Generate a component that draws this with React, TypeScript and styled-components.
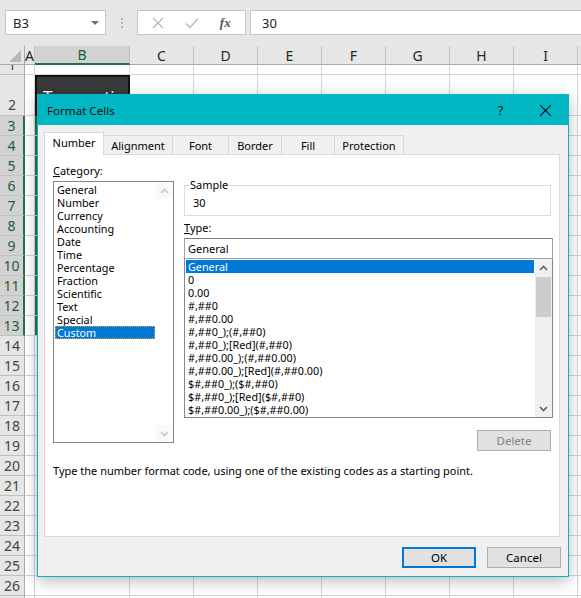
import React from 'react';
import styled, { createGlobalStyle } from 'styled-components';

const GlobalStyle = createGlobalStyle`
  html, body { margin: 0; padding: 0; background: #fff; }
  body { font-family: 'Noto Sans', 'Open Sans', Arial, sans-serif; }
  * { box-sizing: border-box; }
`;

const Screen = styled.div`
  position: relative;
  width: 581px;
  height: 598px;
  overflow: hidden;
  background: #fff;
`;

/* ---------- formula bar ---------- */

const FormulaBar = styled.div`
  height: 46px;
  background: #e6e6e6;
  display: flex;
  align-items: flex-start;
  padding: 10px 0 0 5px;
`;

const NameBox = styled.div`
  width: 101px;
  height: 25px;
  background: #fff;
  border: 1px solid #c6c6c6;
  display: flex;
  align-items: center;
  justify-content: space-between;
  padding: 0 6px 0 7px;
  font-size: 13px;
  color: #222;
`;

const DropTri = styled.span`
  width: 0;
  height: 0;
  border-left: 4px solid transparent;
  border-right: 4px solid transparent;
  border-top: 4px solid #707070;
`;

const Dots = styled.div`
  width: 31px;
  height: 25px;
  display: flex;
  flex-direction: column;
  align-items: center;
  justify-content: center;
  gap: 2px;
  span {
    width: 2px;
    height: 2px;
    background: #b4b4b4;
  }
`;

const FxBox = styled.div`
  width: 109px;
  height: 25px;
  background: #fff;
  border: 1px solid #c6c6c6;
  display: flex;
  align-items: center;
  justify-content: space-around;
  padding: 0 4px;
`;

const FxText = styled.span`
  font-family: 'Liberation Serif', serif;
  font-style: italic;
  font-weight: bold;
  font-size: 13px;
  color: #555;
`;

const FormulaInput = styled.div`
  flex: 1;
  height: 25px;
  margin-left: 4px;
  background: #fff;
  border: 1px solid #c6c6c6;
  border-right: none;
  display: flex;
  align-items: center;
  padding-left: 11px;
  font-size: 13px;
  color: #222;
`;

/* ---------- sheet grid ---------- */

const Sheet = styled.div`
  display: grid;
  grid-template-columns: 25px 10px 95px repeat(8, 64px);
  grid-template-rows: 19px 10px 41px repeat(25, 20px);
  font-size: 14px;
`;

const ColHead = styled.div<{ $sel?: boolean }>`
  background: ${(p) => (p.$sel ? '#d2d2d2' : '#e6e6e6')};
  border-right: 1px solid #c0c0c0;
  border-bottom: ${(p) => (p.$sel ? '2px solid #217346' : '1px solid #ababab')};
  display: flex;
  align-items: center;
  justify-content: center;
  color: ${(p) => (p.$sel ? '#1e5c3a' : '#262626')};
  overflow: hidden;
`;

const Corner = styled.div`
  background: #e6e6e6;
  border-right: 1px solid #ababab;
  border-bottom: 1px solid #ababab;
  position: relative;
  &::after {
    content: '';
    position: absolute;
    right: 3px;
    bottom: 2px;
    border-left: 12px solid transparent;
    border-bottom: 12px solid #b7b7b7;
  }
`;

const RowHead = styled.div<{ $sel?: boolean; $align: 'center' | 'flex-end' | 'flex-start' }>`
  background: ${(p) => (p.$sel ? '#d2d2d2' : '#e6e6e6')};
  border-right: ${(p) => (p.$sel ? '2px solid #217346' : '1px solid #ababab')};
  border-bottom: 1px solid #c0c0c0;
  display: flex;
  align-items: ${(p) => p.$align};
  justify-content: center;
  color: ${(p) => (p.$sel ? '#1e5c3a' : '#444')};
  overflow: hidden;
  line-height: 20px;
`;

const ClippedNum = styled.span`
  display: block;
  margin-top: -10px;
`;

const Cell = styled.div<{ $selLeft?: boolean }>`
  border-right: 1px solid #d4d4d4;
  border-bottom: 1px solid #d4d4d4;
  box-shadow: ${(p) => (p.$selLeft ? 'inset 2px 0 0 #217346' : 'none')};
`;

const DarkCell = styled.div`
  background: #3a3a3a;
  border: 2px solid #111;
  color: #fff;
  font-size: 17px;
  padding: 8px 0 0 6px;
  white-space: nowrap;
  overflow: hidden;
`;

/* ---------- dialog ---------- */

const Dialog = styled.div`
  position: absolute;
  left: 37px;
  top: 94px;
  width: 532px;
  height: 483px;
  background: #f0f0f0;
  border: 1px solid #00b7c3;
  box-shadow: 0 4px 14px rgba(0, 0, 0, 0.28);
  display: flex;
  flex-direction: column;
  font-size: 11px;
  color: #000;
`;

const TitleBar = styled.div`
  height: 30px;
  background: #00b7c3;
  display: flex;
  align-items: center;
  padding-left: 9px;
  font-size: 11.6px;
  color: #111;
`;

const Title = styled.span`
  flex: 1;
`;

const TitleBtn = styled.span`
  width: 45px;
  height: 30px;
  display: flex;
  align-items: center;
  justify-content: center;
  font-size: 13px;
`;

const Body = styled.div`
  flex: 1;
  display: flex;
  flex-direction: column;
  padding: 7px 8px 0 6px;
`;

const TabStrip = styled.div`
  display: flex;
  align-items: flex-end;
  height: 23px;
  position: relative;
  z-index: 1;
  margin-bottom: -1px;
`;

const Tab = styled.div<{ $active?: boolean; $w: number }>`
  width: ${(p) => p.$w}px;
  height: ${(p) => (p.$active ? 23 : 20)}px;
  background: ${(p) => (p.$active ? '#fff' : '#f0f0f0')};
  border: 1px solid #d9d9d9;
  border-bottom: ${(p) => (p.$active ? 'none' : '1px solid #d9d9d9')};
  margin-left: ${(p) => (p.$active ? 0 : -1)}px;
  display: flex;
  align-items: center;
  justify-content: center;
  padding-bottom: ${(p) => (p.$active ? 3 : 0)}px;
`;

const Panel = styled.div`
  width: 516px;
  height: 383px;
  background: #fff;
  border: 1px solid #d9d9d9;
  padding: 9px 6px 0 8px;
  display: flex;
  flex-direction: column;
`;

const Columns = styled.div`
  display: flex;
  gap: 10px;
`;

const LeftCol = styled.div`
  width: 121px;
  display: flex;
  flex-direction: column;
`;

const RightCol = styled.div`
  width: 369px;
  display: flex;
  flex-direction: column;
  padding-top: 16px;
`;

const Label = styled.div<{ $gap?: number }>`
  height: 17px;
  line-height: 14px;
  margin-top: ${(p) => p.$gap ?? 0}px;
  u { text-decoration: underline; }
`;

const ListBox = styled.div<{ $h: number; $top?: boolean }>`
  height: ${(p) => p.$h}px;
  border: 1px solid #828790;
  border-top-color: ${(p) => (p.$top ? '#828790' : '#a0a0a0')};
  background: #fff;
  display: flex;
  font-size: 10.8px;
`;

const Items = styled.div`
  flex: 1;
  padding: 1px 1px 0 1px;
  overflow: hidden;
`;

const Item = styled.div<{ $sel?: boolean; $focus?: boolean }>`
  height: 13px;
  line-height: 13px;
  padding-left: 2px;
  white-space: nowrap;
  background: ${(p) => (p.$sel ? '#0078d7' : 'transparent')};
  color: ${(p) => (p.$sel ? '#fff' : '#000')};
  outline: ${(p) => (p.$focus ? '1px dotted #f0a030' : 'none')};
  outline-offset: -1px;
`;

const ScrollBar = styled.div<{ $disabled?: boolean }>`
  width: 17px;
  background: ${(p) => (p.$disabled ? '#fff' : '#f0f0f0')};
  display: flex;
  flex-direction: column;
  justify-content: space-between;
  align-items: center;
`;

const ScrollBtn = styled.div<{ $disabled?: boolean }>`
  width: 17px;
  height: 17px;
  display: flex;
  align-items: center;
  justify-content: center;
  background: #f0f0f0;
  opacity: ${(p) => (p.$disabled ? 0.35 : 1)};
`;

const Track = styled.div`
  flex: 1;
  width: 15px;
`;

const Thumb = styled.div`
  width: 15px;
  height: 40px;
  margin-top: 1px;
  background: #cdcdcd;
`;

const GroupBox = styled.fieldset`
  margin: 0;
  height: 36px;
  width: 367px;
  border: 1px solid #dcdcdc;
  padding: 0 0 0 8px;
  legend {
    padding: 0 1px;
    margin-left: -4px;
    font-size: 11px;
    line-height: 10px;
  }
`;

const SampleValue = styled.div`
  line-height: 14px;
  margin-top: 6px;
`;

const TypeInput = styled.div`
  height: 20px;
  border: 1px solid #a0a0a0;
  border-top-color: #7a7a7a;
  border-bottom: none;
  display: flex;
  align-items: center;
  padding-left: 3px;
`;

const DeleteRow = styled.div`
  display: flex;
  justify-content: flex-end;
  padding: 12px 2px 0 0;
`;

const Button = styled.div<{ $primary?: boolean; $disabled?: boolean }>`
  width: 74px;
  height: 21px;
  background: #e1e1e1;
  border: ${(p) => (p.$primary ? '2px solid #0078d7' : '1px solid #adadad')};
  color: ${(p) => (p.$disabled ? '#838383' : '#000')};
  display: flex;
  align-items: center;
  justify-content: center;
  font-size: 11.5px;
`;

const Description = styled.div`
  margin-top: 12px;
  line-height: 16px;
  white-space: nowrap;
`;

const Footer = styled.div`
  display: flex;
  justify-content: flex-end;
  gap: 11px;
  padding: 10px 0 0 0;
  margin-right: -1px;
`;

/* ---------- icons ---------- */

const Chevron = ({ up, color = '#606060' }: { up?: boolean; color?: string }) => (
  <svg width="9" height="6" viewBox="0 0 9 6">
    <path
      d={up ? 'M1 5 L4.5 1.5 L8 5' : 'M1 1 L4.5 4.5 L8 1'}
      fill="none"
      stroke={color}
      strokeWidth="1.6"
    />
  </svg>
);

const CrossIcon = ({ size = 12, color = '#b8b8b8', w = 1.3 }: { size?: number; color?: string; w?: number }) => (
  <svg width={size} height={size} viewBox="0 0 12 12">
    <path d="M1 1 L11 11 M11 1 L1 11" stroke={color} strokeWidth={w} fill="none" />
  </svg>
);

const CheckIcon = () => (
  <svg width="14" height="12" viewBox="0 0 14 12">
    <path d="M1 6.5 L5 10.5 L13 1.5" stroke="#b8b8b8" strokeWidth="1.4" fill="none" />
  </svg>
);

/* ---------- data ---------- */

const categories = [
  'General', 'Number', 'Currency', 'Accounting', 'Date', 'Time',
  'Percentage', 'Fraction', 'Scientific', 'Text', 'Special', 'Custom',
];

const formats = [
  'General', '0', '0.00', '#,##0', '#,##0.00',
  '#,##0_);(#,##0)', '#,##0_);[Red](#,##0)',
  '#,##0.00_);(#,##0.00)', '#,##0.00_);[Red](#,##0.00)',
  '$#,##0_);($#,##0)', '$#,##0_);[Red]($#,##0)',
  '$#,##0.00_);($#,##0.00)',
];

const tabs = [
  { label: 'Number', w: 60 },
  { label: 'Alignment', w: 70 },
  { label: 'Font', w: 57 },
  { label: 'Border', w: 54 },
  { label: 'Fill', w: 54 },
  { label: 'Protection', w: 70 },
];

const colLabels = ['A', 'B', 'C', 'D', 'E', 'F', 'G', 'H', 'I', 'J'];
const rowCount = 28;

const App: React.FC = () => {
  const rows: React.ReactNode[] = [];
  for (let r = 1; r <= rowCount; r++) {
    const sel = r >= 3 && r <= 13;
    rows.push(
      <RowHead
        key={`rh${r}`}
        $sel={sel}
        $align={r === 1 ? 'flex-start' : r === 2 ? 'flex-end' : 'center'}
      >
        {r === 1 ? <ClippedNum>1</ClippedNum> : r}
      </RowHead>
    );
    colLabels.forEach((c) => {
      if (c === 'B' && r === 2) {
        rows.push(<DarkCell key={`c${c}${r}`}>Transaction</DarkCell>);
      } else {
        rows.push(<Cell key={`c${c}${r}`} $selLeft={c === 'B' && sel} />);
      }
    });
  }

  return (
    <Screen>
      <GlobalStyle />
      <FormulaBar>
        <NameBox>
          B3
          <DropTri />
        </NameBox>
        <Dots>
          <span />
          <span />
          <span />
        </Dots>
        <FxBox>
          <CrossIcon />
          <CheckIcon />
          <FxText>fx</FxText>
        </FxBox>
        <FormulaInput>30</FormulaInput>
      </FormulaBar>

      <Sheet>
        <Corner />
        {colLabels.map((c) => (
          <ColHead key={c} $sel={c === 'B'}>
            {c}
          </ColHead>
        ))}
        {rows}
      </Sheet>

      <Dialog>
        <TitleBar>
          <Title>Format Cells</Title>
          <TitleBtn>?</TitleBtn>
          <TitleBtn>
            <CrossIcon size={13} color="#111" w={1.1} />
          </TitleBtn>
        </TitleBar>
        <Body>
          <TabStrip>
            {tabs.map((t, i) => (
              <Tab key={t.label} $w={t.w} $active={i === 0}>
                {t.label}
              </Tab>
            ))}
          </TabStrip>
          <Panel>
            <Columns>
              <LeftCol>
                <Label>
                  <u>C</u>ategory:
                </Label>
                <ListBox $h={262} $top>
                  <Items>
                    {categories.map((c) => (
                      <Item key={c} $sel={c === 'Custom'} $focus={c === 'Custom'}>
                        {c}
                      </Item>
                    ))}
                  </Items>
                  <ScrollBar $disabled>
                    <ScrollBtn $disabled>
                      <Chevron up />
                    </ScrollBtn>
                    <ScrollBtn $disabled>
                      <Chevron />
                    </ScrollBtn>
                  </ScrollBar>
                </ListBox>
              </LeftCol>
              <RightCol>
                <GroupBox>
                  <legend>Sample</legend>
                  <SampleValue>30</SampleValue>
                </GroupBox>
                <Label $gap={5}>
                  <u>T</u>ype:
                </Label>
                <TypeInput>General</TypeInput>
                <ListBox $h={160}>
                  <Items>
                    {formats.map((f, i) => (
                      <Item key={f} $sel={i === 0}>
                        {f}
                      </Item>
                    ))}
                  </Items>
                  <ScrollBar>
                    <ScrollBtn>
                      <Chevron up />
                    </ScrollBtn>
                    <Track>
                      <Thumb />
                    </Track>
                    <ScrollBtn>
                      <Chevron />
                    </ScrollBtn>
                  </ScrollBar>
                </ListBox>
                <DeleteRow>
                  <Button $disabled>Delete</Button>
                </DeleteRow>
              </RightCol>
            </Columns>
            <Description>
              Type the number format code, using one of the existing codes as a starting point.
            </Description>
          </Panel>
          <Footer>
            <Button $primary>OK</Button>
            <Button>Cancel</Button>
          </Footer>
        </Body>
      </Dialog>
    </Screen>
  );
};

export default App;
